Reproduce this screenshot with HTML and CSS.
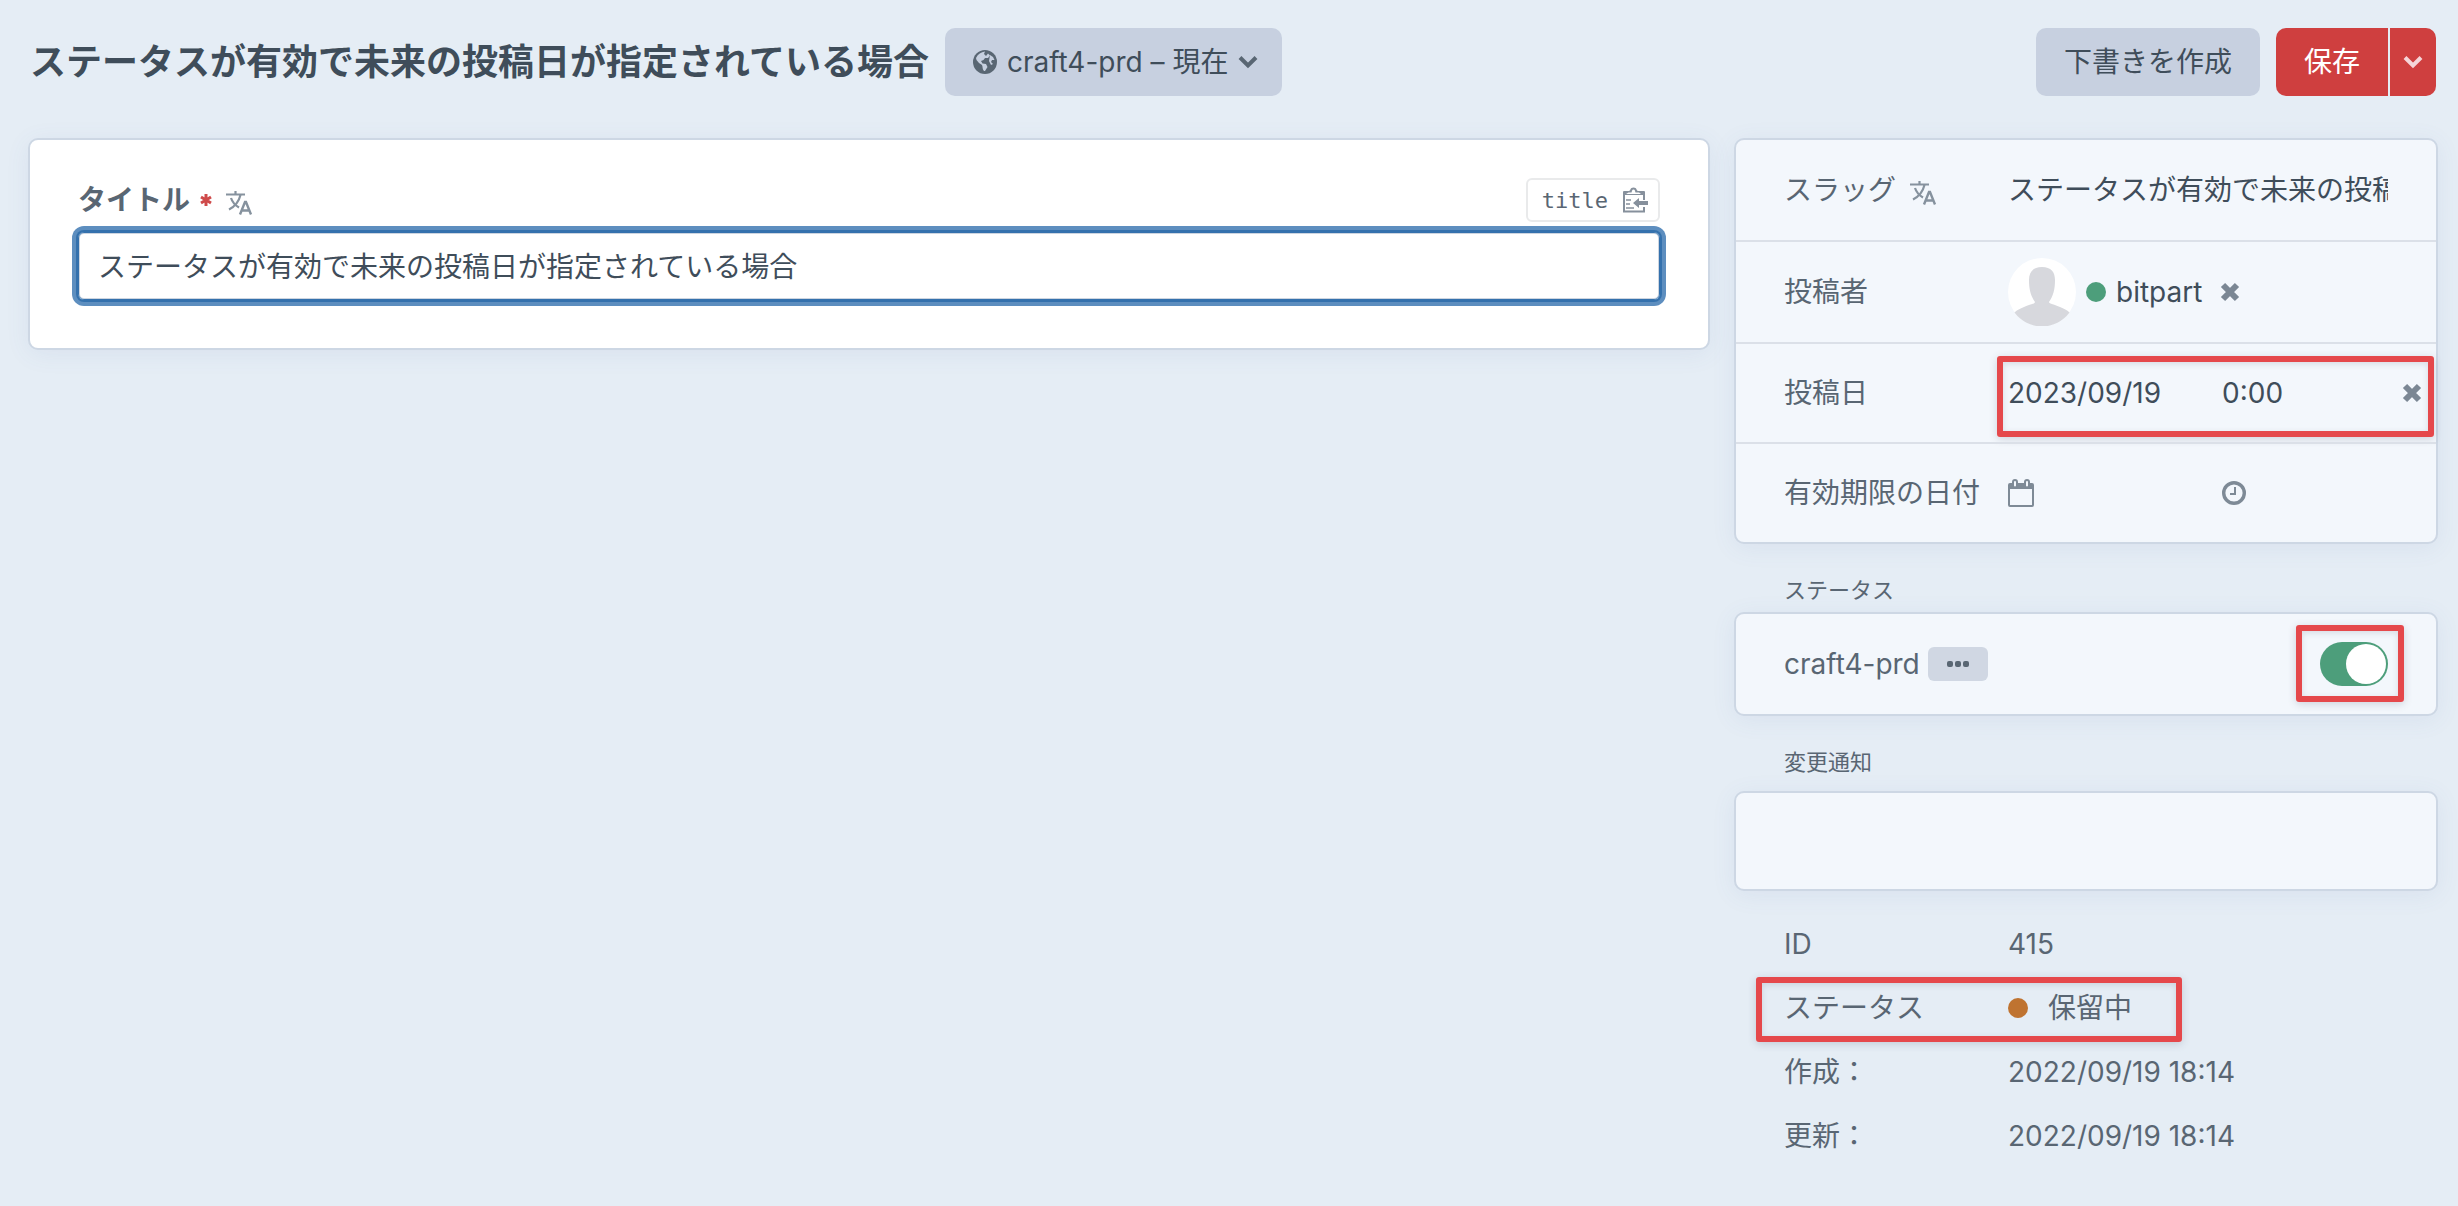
FILE: index.html
```html
<!DOCTYPE html>
<html lang="ja">

<head>
    <meta charset="UTF-8">
    <meta name="viewport" content="width=device-width, initial-scale=1.0">
    <title>ステータスが有効で未来の投稿日が指定されている場合</title>
    <link rel="stylesheet" href="styles.css">
</head>

<body>

    <!-- Shared icons -->
    <svg class="sprite" aria-hidden="true">
        <symbol id="icon-translate" viewBox="0 0 26 26">
            <path d="M0 4.500H19M9.500 1V4.500M3 19.500C9 16.500 13 11 14.500 5M5 8C6.500 12.500 9.500 15.500 13 17.500" fill="none" stroke="currentColor" stroke-width="2.200" />
            <path d="M14 24.500L19 12H20L25 24.500M15.500 20.500H23.500" fill="none" stroke="currentColor" stroke-width="2.400" />
        </symbol>
        <symbol id="icon-remove" viewBox="0 0 20 20">
            <path d="M3 3L17 17M17 3L3 17" fill="none" stroke="currentColor" stroke-width="6" />
        </symbol>
        <symbol id="icon-chevron" viewBox="0 0 20 14">
            <path d="M2 2.500L10 10.500L18 2.500" fill="none" stroke="currentColor" stroke-width="4" />
        </symbol>
    </svg>

    <!-- Header -->
    <header class="header">
        <h1>ステータスが有効で未来の投稿日が指定されている場合</h1>
        <button type="button" class="btn context-btn">
            <svg class="globe" viewBox="0 0 24 24" aria-hidden="true">
                <circle cx="12" cy="12" r="12" fill="currentColor" />
                <path class="land" d="M3 8C5 4 8 2 12 1.500L11 4L13 6L15 3.500L17 5.500L15 8L12 8L10.500 10L8 11L9.500 13.500L13 14L14.500 17L12 21L11 21C9 19 10 17 9 15L6 13L3.500 10Z" />
                <path class="land" d="M17 5L20 7L21.500 10L19 10L18 12L20 14L18 15L16 11Z" />
            </svg>
            <span>craft4-prd – 現在</span>
            <svg class="chevron" aria-hidden="true"><use href="#icon-chevron" /></svg>
        </button>
        <div class="actions">
            <button type="button" class="btn">下書きを作成</button>
            <div class="btn-group">
                <button type="submit" class="btn submit">保存</button>
                <button type="button" class="btn submit menu" aria-label="保存オプション">
                    <svg class="chevron" aria-hidden="true"><use href="#icon-chevron" /></svg>
                </button>
            </div>
        </div>
    </header>

    <div class="main">

        <!-- Content -->
        <main class="pane content">
            <div class="field-heading">
                <label for="title">タイトル</label>
                <svg class="required" viewBox="0 0 12 12" aria-hidden="true">
                    <path d="M6 0V12M1 3L11 9M11 3L1 9" fill="none" stroke="currentColor" stroke-width="3" />
                </svg>
                <svg class="translate" aria-hidden="true"><use href="#icon-translate" /></svg>
                <button type="button" class="copy-btn">
                    <code>title</code>
                    <svg class="clipboard" viewBox="0 0 26 26" aria-hidden="true">
                        <path d="M22 13V6H2V24.500H22V20" fill="none" stroke="currentColor" stroke-width="2" />
                        <path d="M1 5A1 1 0 0 1 2 4H7C8.500 4 8 0.500 11.500 0.500S14.500 4 16 4H22A1 1 0 0 1 23 5V8H1Z" fill="currentColor" />
                        <path class="paper" d="M4 7L6.500 5.500H9.500C10 4 10 2.500 11.500 2.500S13 4 13.500 5.500H17L19 7Z" />
                        <path d="M4 13H9M4 17H8M4 21H12" stroke="currentColor" stroke-width="1.500" />
                        <path d="M11 16L17 11V14H26V18H17V21Z" fill="currentColor" />
                    </svg>
                </button>
            </div>
            <input type="text" id="title" class="title-input" value="ステータスが有効で未来の投稿日が指定されている場合">
        </main>

        <!-- Details -->
        <aside class="details">
            <div class="pane meta">
                <div class="field">
                    <label for="slug">スラッグ</label>
                    <svg class="translate" aria-hidden="true"><use href="#icon-translate" /></svg>
                    <input type="text" id="slug" class="value" value="ステータスが有効で未来の投稿日が指定されている場合">
                </div>
                <div class="field">
                    <span class="label">投稿者</span>
                    <div class="value author">
                        <svg class="avatar" viewBox="0 0 68 68" aria-hidden="true">
                            <circle cx="34" cy="34" r="34" fill="#fff" />
                            <path d="M34 9C43 9 47 14 47 22C47 32 45 38 41 44C41 46 47 46.500 52 49C56 51 59 52 61.500 54.500A34 34 0 0 1 6.500 54.500C9 52 12 51 16 49C21 46.500 27 46 27 44C23 38 21 32 21 22C21 14 25 9 34 9Z" fill="#d7d8dd" />
                        </svg>
                        <span class="dot live"></span>
                        <span class="name">bitpart</span>
                        <button type="button" class="remove" aria-label="削除"><svg aria-hidden="true"><use href="#icon-remove" /></svg></button>
                    </div>
                </div>
                <div class="field short">
                    <label for="postDate">投稿日</label>
                    <div class="value datetime">
                        <input type="text" id="postDate" class="date" value="2023/09/19">
                        <input type="text" class="time" value="0:00" aria-label="投稿時刻">
                        <button type="button" class="remove" aria-label="クリア"><svg aria-hidden="true"><use href="#icon-remove" /></svg></button>
                    </div>
                    <span class="mark mark-date"></span>
                </div>
                <div class="field short">
                    <label for="expiryDate">有効期限の日付</label>
                    <div class="value datetime">
                        <div class="date">
                            <svg class="calendar" viewBox="0 0 26 28" aria-hidden="true">
                                <path d="M2 4H24A2 2 0 0 1 26 6V26A2 2 0 0 1 24 28H2A2 2 0 0 1 0 26V6A2 2 0 0 1 2 4ZM2 10V26H24V10Z" fill="currentColor" fill-rule="evenodd" />
                                <path class="ring" d="M7 3V5M19 3V5" />
                                <path class="hole" d="M7 3V6.500M19 3V6.500" />
                            </svg>
                            <input type="text" id="expiryDate">
                        </div>
                        <div class="time">
                            <svg class="clock" viewBox="0 0 24 24" aria-hidden="true">
                                <circle cx="12" cy="12" r="10.300" fill="none" stroke="currentColor" stroke-width="3.400" />
                                <path d="M13 6V13H8" fill="none" stroke="currentColor" stroke-width="2" />
                            </svg>
                            <input type="text" aria-label="有効期限の時刻">
                        </div>
                    </div>
                </div>
            </div>

            <h2>ステータス</h2>
            <div class="pane meta">
                <div class="field">
                    <label for="enabled">craft4-prd</label>
                    <button type="button" class="more" aria-label="メニュー">
                        <svg viewBox="0 0 22 6" aria-hidden="true">
                            <rect x="0" y="0" width="6" height="6" rx="2" />
                            <rect x="8" y="0" width="6" height="6" rx="2" />
                            <rect x="16" y="0" width="6" height="6" rx="2" />
                        </svg>
                    </button>
                    <input type="checkbox" role="switch" id="enabled" class="lightswitch" checked>
                    <span class="mark mark-switch"></span>
                </div>
            </div>

            <h2 class="notes-heading"><label for="notes">変更通知</label></h2>
            <textarea id="notes" class="pane notes"></textarea>

            <dl class="read-only">
                <div>
                    <dt>ID</dt>
                    <dd>415</dd>
                </div>
                <div>
                    <dt>ステータス</dt>
                    <dd><span class="dot pending"></span>保留中<span class="mark mark-status"></span></dd>
                </div>
                <div>
                    <dt>作成：</dt>
                    <dd>2022/09/19 18:14</dd>
                </div>
                <div>
                    <dt>更新：</dt>
                    <dd>2022/09/19 18:14</dd>
                </div>
            </dl>
        </aside>
    </div>

</body>

</html>
```

FILE: styles.css
```css
/* Global Styles */
* {
    box-sizing: border-box;
}

body {
    margin: 0;
    min-height: 100vh;
    font-family: Inter, "Noto Sans CJK JP", sans-serif;
    font-size: 28px;
    line-height: 40px;
    color: #596673;
    background-color: #e5edf5;
}

button,
input,
textarea {
    font: inherit;
    color: #3f4d5a;
}

button {
    padding: 0;
    border: none;
    cursor: pointer;
}

input {
    min-width: 0;
    padding: 0;
    border: none;
    outline: none;
    background: transparent;
}

svg {
    display: block;
    flex: none;
}

.sprite {
    position: absolute;
    width: 0;
    height: 0;
}

/* Header */
.header {
    display: flex;
    align-items: center;
    padding: 28px 22px 42px 30px;
}

h1 {
    margin: 0 16px 0 0;
    font-size: 36px;
    line-height: 48px;
    font-weight: 700;
    color: #3f4d5a;
    white-space: nowrap;
}

.btn {
    display: flex;
    align-items: center;
    justify-content: center;
    height: 68px;
    padding: 0 28px;
    border-radius: 10px;
    background-color: #c7d0e0;
    white-space: nowrap;
}

.btn:hover {
    background-color: #bcc6d8;
}

.context-btn {
    gap: 10px;
    padding: 0 24px 0 28px;
}

.globe {
    width: 24px;
    height: 24px;
    color: #596673;
}

.globe .land {
    fill: #c7d0e0;
}

.chevron {
    width: 20px;
    height: 14px;
    color: #596673;
}

.actions {
    display: flex;
    gap: 16px;
    margin-left: auto;
}

.btn-group {
    display: flex;
    gap: 2px;
}

.submit {
    border-radius: 10px 0 0 10px;
    background-color: #cf3f3f;
    color: #fff;
}

.submit:hover {
    background-color: #bd3434;
}

.submit.menu {
    width: 46px;
    padding: 0;
    border-radius: 0 10px 10px 0;
}

.submit .chevron {
    color: #f5d5d8;
}

/* Layout */
.main {
    display: grid;
    grid-template-columns: minmax(0, 1fr) 704px;
    align-items: start;
    gap: 24px;
    padding: 0 20px 36px 28px;
}

.pane {
    border: 2px solid #cdd7e4;
    border-radius: 10px;
    box-shadow: 0 4px 24px rgba(77, 104, 160, 0.08);
}

/* Title field */
.content {
    padding: 38px 48px 48px;
    background-color: #fff;
}

.field-heading {
    display: flex;
    align-items: center;
    height: 44px;
    margin-bottom: 10px;
    font-weight: 700;
}

.required {
    width: 12px;
    height: 12px;
    margin-left: 10px;
    color: #cf4a4a;
}

.translate {
    width: 26px;
    height: 26px;
    margin: 6px 0 0 14px;
    color: #86929e;
}

.copy-btn {
    display: flex;
    align-items: center;
    gap: 14px;
    height: 44px;
    margin-left: auto;
    padding: 0 10px 0 14px;
    border: 2px solid #e9eaeb;
    border-radius: 6px;
    background-color: #fff;
}

.copy-btn code {
    font: 22px "DejaVu Sans Mono", monospace;
    color: #596673;
}

.clipboard {
    width: 26px;
    height: 26px;
    color: #86909c;
}

.clipboard .paper {
    fill: #fff;
}

.title-input {
    display: block;
    width: 100%;
    height: 68px;
    padding: 0 19px 2px;
    border: 1px solid #3471ad;
    border-radius: 6px;
    box-shadow: inset 0 0 0 1px #cdd5e0, 0 0 0 2px #3471ad, 0 0 0 6px #5d8ebf;
}

/* Details */
.meta,
.notes {
    background-color: #f3f7fc;
}

.field {
    position: relative;
    display: flex;
    align-items: center;
    height: 100px;
    padding: 0 48px;
}

.field.short {
    height: 98px;
}

.field + .field {
    box-sizing: content-box;
    border-top: 2px solid #dbe0e8;
}

.field .value {
    width: 380px;
    margin-left: auto;
}

.author {
    display: flex;
    align-items: center;
}

.avatar {
    width: 68px;
    height: 68px;
    margin-right: 10px;
}

.dot {
    width: 20px;
    height: 20px;
    border-radius: 50%;
}

.live {
    background-color: #4d9e7b;
}

.pending {
    background-color: #bf7330;
}

.name {
    margin: 0 18px 0 10px;
    color: #3f4d5a;
}

.remove {
    background: none;
    color: #7b8794;
}

.remove svg {
    width: 20px;
    height: 20px;
}

.field .datetime {
    display: flex;
    align-items: center;
    width: 416px;
    margin-right: -36px;
}

.date {
    width: 214px;
}

.time {
    width: 180px;
}

.datetime div {
    display: flex;
    align-items: center;
    color: #7e8a96;
}

.datetime div input {
    flex: 1;
}

.calendar {
    width: 26px;
    height: 28px;
}

.calendar .ring {
    fill: none;
    stroke: currentColor;
    stroke-width: 6;
    stroke-linecap: round;
}

.calendar .hole {
    fill: none;
    stroke: #f3f7fc;
    stroke-width: 2;
    stroke-linecap: round;
}

.clock {
    width: 24px;
    height: 24px;
}

h2 {
    margin: 31px 0 7px 50px;
    font-size: 22px;
    line-height: 30px;
    font-weight: 400;
}

.notes-heading {
    margin-bottom: 14px;
}

.more {
    display: flex;
    align-items: center;
    justify-content: center;
    width: 60px;
    height: 34px;
    margin-left: 8px;
    border-radius: 6px;
    background-color: #d0d7e3;
}

.more svg {
    width: 22px;
    height: 6px;
    fill: #596673;
}

.lightswitch {
    appearance: none;
    width: 68px;
    height: 44px;
    margin: 0 0 0 auto;
    padding: 2px;
    border-radius: 22px;
    background-color: #9aa5b1;
    cursor: pointer;
}

.lightswitch::before {
    content: "";
    display: block;
    width: 40px;
    height: 40px;
    border-radius: 50%;
    background-color: #fff;
}

.lightswitch:checked {
    background-color: #4d9e7b;
}

.lightswitch:checked::before {
    margin-left: auto;
}

.notes {
    display: block;
    width: 100%;
    height: 100px;
    padding: 28px 48px;
    outline: none;
    resize: none;
}

.read-only {
    margin: 21px 0 0;
    padding: 0 50px;
}

.read-only div {
    position: relative;
    display: flex;
    align-items: center;
    height: 64px;
}

.read-only dt {
    width: 224px;
}

.read-only dd {
    display: flex;
    align-items: center;
    gap: 20px;
    margin: 0;
}

/* Red highlight frames */
.mark {
    position: absolute;
    border: 6px solid #e5484b;
    border-radius: 3px;
    box-shadow: 0 2px 8px rgba(60, 70, 90, 0.2), inset 0 2px 6px rgba(60, 70, 90, 0.15);
    pointer-events: none;
}

.mark-date {
    top: 12px;
    right: 2px;
    width: 437px;
    height: 81px;
}

.mark-switch {
    top: 11px;
    right: 32px;
    width: 108px;
    height: 77px;
}

.mark-status {
    top: 1px;
    left: -28px;
    width: 426px;
    height: 65px;
}
```
